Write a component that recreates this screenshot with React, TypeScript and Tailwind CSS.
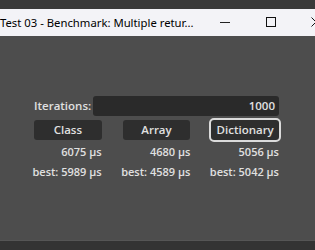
import React from "react"

const results = [
  { name: "Class", time: 6075, best: 5989, focused: false },
  { name: "Array", time: 4680, best: 4589, focused: false },
  { name: "Dictionary", time: 5056, best: 5042, focused: true },
]

export default function App() {
  return (
    <div className="w-[315px] h-[250px] flex flex-col overflow-hidden bg-[#333333]" style={{ fontFamily: '"Open Sans", "Noto Sans", sans-serif' }}>
      <div className="h-[9px] bg-[#3a3a3a]" />

      {/* window title bar */}
      <div className="h-[27px] bg-[#f3f3f7] flex items-center relative">
        <span className="text-[11.3px] text-black whitespace-nowrap leading-none" style={{ fontFamily: '"Noto Sans", sans-serif' }}>
          Test 03 - Benchmark: Multiple retur...
        </span>
        <div className="absolute left-[220px] top-[13px] w-[10px] h-px bg-[#222]" />
        <div className="absolute left-[266px] top-[8px] w-[10px] h-[10px] border border-[#111]" />
        <svg className="absolute left-[311px] top-[8px]" width="10" height="10" viewBox="0 0 10 10">
          <path d="M0.5 0.5 L9.5 9.5 M9.5 0.5 L0.5 9.5" stroke="#111" strokeWidth="1" />
        </svg>
      </div>

      {/* game viewport */}
      <div className="flex-1 bg-[#4d4d4d] pt-[60px] pl-[34px] text-[11px] font-semibold text-[#e0e0e0]">
        <div className="w-[245px] flex flex-col">
          <div className="flex items-center h-[20px] justify-between">
            <span className="text-[11.5px]">Iterations:</span>
            <div className="w-[186px] h-[20px] rounded-[3px] bg-[#2a2a2a] flex items-center justify-end pr-[4px] text-[11.5px]">1000</div>
          </div>

          <div className="grid grid-cols-3 gap-x-[21px] mt-[4px]">
            {results.map(r => (
              <div key={r.name} className="flex flex-col items-stretch">
                <button
                  className={
                    "h-[20px] rounded-[3px] bg-[#2e2e2e] text-[#e0e0e0] text-[11.5px] font-semibold leading-none " +
                    (r.focused ? "outline-2 outline-[rgba(255,255,255,0.8)]" : "")
                  }
                >
                  {r.name}
                </button>
                <div className="h-[20px] mt-[2px] flex items-center justify-end whitespace-nowrap">{r.time} µs</div>
                <div className="h-[20px] flex items-center justify-end whitespace-nowrap">best: {r.best} µs</div>
              </div>
            ))}
          </div>
        </div>
      </div>

      <div className="h-px bg-[#555555]" />
      <div className="h-[9px] bg-[#333333]" />
    </div>
  )
}
